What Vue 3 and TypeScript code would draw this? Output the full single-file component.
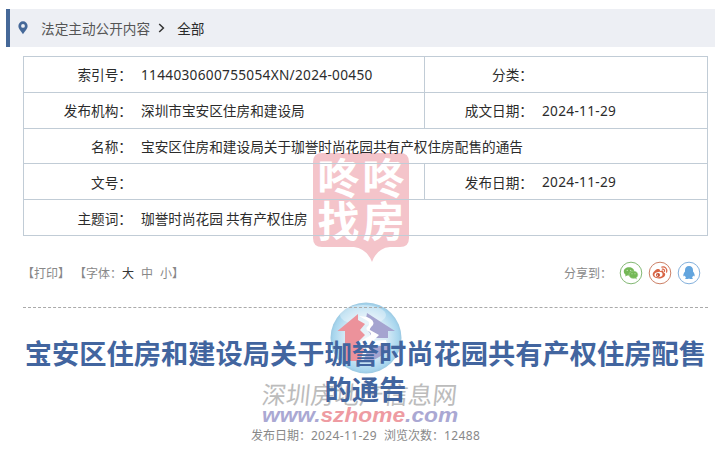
<script setup lang="ts">
interface Field { label: string; value: string; code?: boolean }
const rows: Field[][] = [
  [{ label: '索引号', value: '1144030600755054XN/2024-00450', code: true }, { label: '分类', value: '' }],
  [{ label: '发布机构', value: '深圳市宝安区住房和建设局' }, { label: '成文日期', value: '2024-11-29', code: true }],
  [{ label: '名称', value: '宝安区住房和建设局关于珈誉时尚花园共有产权住房配售的通告' }],
  [{ label: '文号', value: '' }, { label: '发布日期', value: '2024-11-29', code: true }],
  [{ label: '主题词', value: '珈誉时尚花园 共有产权住房' }],
]
</script>

<template>
  <main class="page">
    <nav class="crumbs">
      <svg class="pin" viewBox="0 0 10 14"><path fill-rule="evenodd" d="M5 .3A4.6 4.6 0 0 0 .4 4.9C.4 8 3.5 10.400 5 13.300 6.500 10.400 9.600 8 9.600 4.900A4.600 4.600 0 0 0 5 .3ZM5 3a1.900 1.900 0 1 1 0 3.800A1.900 1.900 0 0 1 5 3Z" fill="#456898" /></svg>
      <span class="section">法定主动公开内容</span>
      <svg class="chevron" viewBox="0 0 7 10"><path d="M1.200 1 5.400 5 1.200 9" fill="none" stroke="#333" stroke-width="1.500" /></svg>
      <span class="current">全部</span>
    </nav>

    <section class="info">
      <div v-for="(row, i) in rows" :key="i" class="row">
        <div v-for="f in row" :key="f.label" class="cell">
          <span class="label">{{ f.label }}：</span>
          <span class="value" :class="{ code: f.code }">{{ f.value }}</span>
        </div>
      </div>
    </section>

    <div class="tools">
      <span class="print">【打印】</span>
      <span class="sizes">【字体：<b>大</b><i>中</i><i>小</i>】</span>
      <span class="share">分享到：</span>
      <svg class="social" viewBox="0 0 24 24">
        <circle cx="12" cy="12" r="10.800" fill="#fff" stroke="#83b874" />
        <path d="M10 6.200c-3 0-5.200 1.800-5.200 4.200 0 1.400.7 2.500 1.800 3.300l-.4 1.700 2-1c.6.2 1.200.2 1.800.2 3 0 5.200-1.800 5.200-4.200S13 6.200 10 6.200Z" fill="#74b856" />
        <path d="M14.500 10c-2.600 0-4.500 1.600-4.500 3.700s1.900 3.700 4.500 3.700c.5 0 1-.1 1.500-.2l1.700.9-.4-1.500c1-.7 1.600-1.700 1.600-2.900 0-2.100-1.900-3.700-4.400-3.700Z" fill="#74b856" stroke="#b5d9a5" stroke-width=".5" />
        <g fill="#d9efcf"><circle cx="8.200" cy="9.300" r=".6" /><circle cx="11.700" cy="9.300" r=".6" /><circle cx="13" cy="12.700" r=".5" /><circle cx="16" cy="12.700" r=".5" /></g>
      </svg>
      <svg class="social" viewBox="0 0 24 24">
        <circle cx="12" cy="12" r="10.800" fill="#fff" stroke="#cc8066" />
        <path d="M9.500 8c-2 .5-4.800 3.400-4.800 5.600 0 2.300 2.800 3.800 6 3.800 3.700 0 6.500-1.900 6.500-4 0-1.200-.8-1.900-1.900-2.200.5-1.700-.7-2.300-3.300-1.200.2-1.400-.5-2.500-2.500-2Z" fill="#d96545" />
        <ellipse cx="10.500" cy="13.600" rx="4.100" ry="2.700" fill="#fff" transform="rotate(-7 10.500 13.600)" />
        <circle cx="10" cy="13.900" r="2" fill="#c44e32" /><circle cx="9.500" cy="14.200" r=".6" fill="#fff" />
        <path d="M13.800 6.100c3.400-.8 5.800 1.800 4.800 5M14.300 8.200c1.500-.3 2.600.8 2.200 2.200" fill="none" stroke="#d96545" stroke-width="1.200" stroke-linecap="round" />
      </svg>
      <svg class="social" viewBox="0 0 24 24">
        <circle cx="12" cy="12" r="10.800" fill="#fff" stroke="#83b0dc" />
        <path d="M12 5c-2.600 0-4 1.800-4 4.300v1.300c-1.100 1.400-1.900 3-1.600 4.500.2.600.9.100 1.400-.7.200.8.600 1.500 1.200 2-1.300.5-1 1.600.7 1.600 1 0 1.800-.2 2.300-.6.500.4 1.300.6 2.300.6 1.700 0 2-1.100.7-1.600.6-.5 1-1.200 1.200-2 .5.800 1.200 1.300 1.400.7.300-1.500-.5-3.100-1.600-4.500V9.300C16 6.800 14.600 5 12 5Z" fill="#63a5de" />
      </svg>
    </div>

    <article class="notice">
      <h1>宝安区住房和建设局关于珈誉时尚花园共有产权住房配售的通告</h1>
      <p><span>发布日期：<span class="num">2024-11-29</span></span><span>浏览次数：<span class="num">12488</span></span></p>
    </article>

    <div class="stamp">
      <svg viewBox="0 0 96 110"><path d="M9 0H87Q96 0 96 9V85Q96 94 87 94H77Q64 95 59 109Q54 96 41 94H9Q0 94 0 85V9Q0 0 9 0Z" fill="#f4c4ca" /></svg>
      <div class="stamp-text"><span>咚</span><span>咚</span><span>找</span><span>房</span></div>
    </div>

    <svg class="bubble" viewBox="0 0 72 72">
      <defs>
        <radialGradient id="glass" cx="50%" cy="50%" r="50%">
          <stop offset="0" stop-color="#eef6fb" />
          <stop offset=".6" stop-color="#d5eaf6" />
          <stop offset=".92" stop-color="#a8d6ee" />
          <stop offset="1" stop-color="#9bc9e2" />
        </radialGradient>
      </defs>
      <circle cx="36" cy="36" r="35.500" fill="url(#glass)" />
      <ellipse cx="33" cy="13" rx="23" ry="10" fill="#fff" opacity=".35" />
      <path d="M28 12 7.500 29H15v30h16l3-12-7-6 8-8-5-5 5-6-7-4Z" fill="#ec929b" />
      <path d="M37 11 65 29h-7v7H45l-8 4v4h21v6L42 59l-8-1 4-12 3-9-1-6-4-4 5-6-5-4Z" fill="#a5a4d0" />
      <path d="M29 14 36 18Q42 21 37 25 34 28 40 30 43 33 36 36L28 41 35 44 31 57 44 43 57 42 56 38 43 39 49 33 40 28Q39 27 43 23 45 18 37 15Z" fill="#fff" />
    </svg>

    <div class="site-mark">
      <div class="site-name">深圳房地产信息网</div>
      <div class="site-url">www.<em>szhome</em>.com</div>
    </div>
  </main>
</template>

<style>
body { background: #fff; }
</style>

<style scoped>
.page {
  position: relative;
  isolation: isolate;
  width: 715px;
  height: 452px;
  overflow: hidden;
  padding-top: 9px;
  box-sizing: border-box;
  font-family: "Noto Sans", "Noto Sans CJK SC", sans-serif;
  font-size: 13.65px;
  color: #2b2b2b;
  white-space: nowrap;
}
.crumbs {
  display: flex;
  align-items: center;
  box-sizing: border-box;
  height: 38px;
  margin-left: 6px;
  padding: 0 0 0 8px;
  border-left: 4px solid #456898;
  background: #edeff4;
  font-family: "Noto Sans CJK SC", sans-serif;
  line-height: 38px;
}
.pin { width: 10px; height: 14px; margin-right: 13px; }
.section { color: #555; }
.chevron { width: 7px; height: 10px; margin: 0 12px 0 8px; }
.info {
  width: 685px;
  box-sizing: border-box;
  margin: 9px 0 0 23px;
  border: 1px solid #c1ccd6;
  border-bottom: 0;
}
.row { display: flex; height: 35.8px; box-sizing: border-box; border-bottom: 1px solid #c1ccd6; }
.cell { display: flex; align-items: center; flex: 1; }
.cell:first-child:not(:last-child) { flex: 0 0 400px; }
.cell + .cell { border-left: 1px solid #c1ccd6; }
.label { width: 108px; text-align: right; margin-right: 9px; font-family: "Noto Sans CJK SC", sans-serif; }
.value { font-family: "Noto Sans CJK SC", sans-serif; }
.value.code { font-family: "Noto Sans", sans-serif; letter-spacing: .3px; }
.tools {
  display: flex;
  align-items: center;
  height: 24px;
  margin: 25px 14px 0 22px;
  font-family: "Noto Sans CJK SC", sans-serif;
  font-size: 12px;
  color: #888;
}
.print { margin-right: 4px; }
.sizes b, .sizes i { font-style: normal; font-weight: 400; margin-right: 7px; }
.sizes b { color: #333; }
.sizes i:last-child { margin-right: 0; }
.share { margin-left: auto; margin-right: 2px; }
.social { width: 24px; height: 24px; margin-left: 5px; }
.notice { margin: 22px 7px 0 23px; border-top: 1px dashed #aaa; text-align: center; }
h1 {
  margin: 26px -4px 0 -4px;
  font: 700 27.25px/36px "Noto Sans CJK SC", sans-serif;
  color: #42659f;
  white-space: normal;
  word-break: break-all;
}
p { margin: 21px 0 0; font-size: 12px; line-height: 18px; color: #888; }
p > span + span { margin-left: 7px; }
.num { letter-spacing: .35px; }
.stamp { position: absolute; z-index: -1; left: 313px; top: 153px; width: 96px; height: 110px; }
.stamp svg { display: block; width: 96px; height: 110px; }
.stamp-text {
  position: absolute;
  left: 3px;
  top: 2px;
  display: grid;
  grid-template-columns: 45px 45px;
  grid-template-rows: 43px 43px;
  text-align: center;
  color: #fff;
  font: 700 42px/42px "Noto Sans CJK SC", sans-serif;
}
.site-mark { position: absolute; z-index: -1; left: 262px; top: 379px; width: 196px; }
.site-name { font: 400 24.4px/30px "Noto Sans CJK SC", sans-serif; color: #bcbcbc; transform: skewX(-6deg); }
.site-url {
  width: max-content;
  margin-top: -4px;
  font: italic 700 19.500px/20px "Liberation Sans", sans-serif;
  color: #aaa8d3;
  transform: scaleX(1.165);
  transform-origin: 0 50%;
}
.site-url em { color: #ee9ba2; }
.bubble { position: absolute; z-index: -1; left: 330px; top: 302px; width: 72px; height: 72px; }
</style>
